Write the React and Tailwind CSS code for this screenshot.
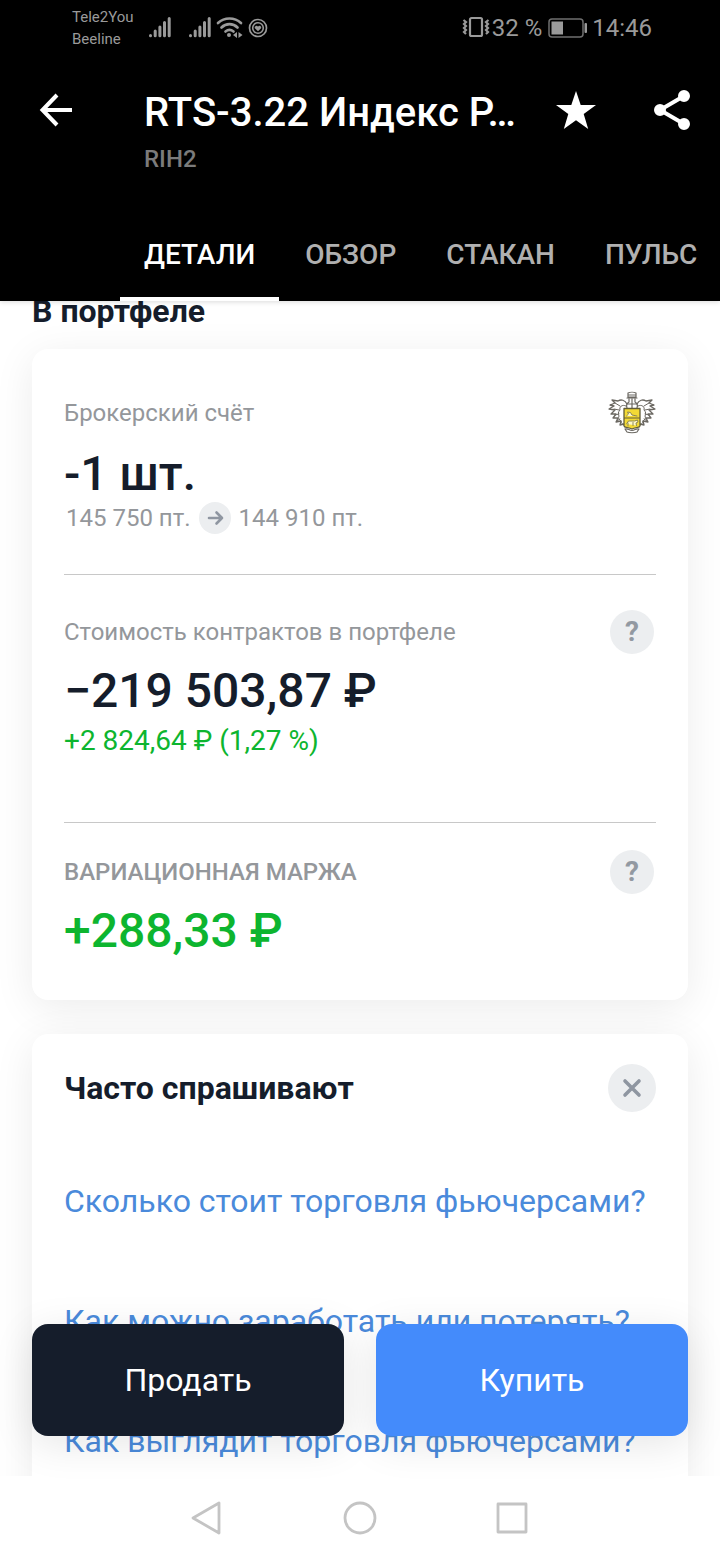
import React, { useState } from "react";

const tabs = ["ДЕТАЛИ", "ОБЗОР", "СТАКАН", "ПУЛЬС"];

const questions = [
  "Сколько стоит торговля фьючерсами?",
  "Как можно заработать или потерять?",
  "Как выглядит торговля фьючерсами?",
];

const SignalIcon = () => (
  <svg className="h-6 w-6" viewBox="0 0 24 24" stroke="#9a9a9a" strokeWidth="3" strokeLinecap="round">
    <path d="M2.500 19.500v.3M7.200 15v4.800M11.900 11v8.800M16.500 6.500v13.300M21.200 2.500v17.300" />
  </svg>
);

const WifiIcon = () => (
  <svg className="h-6 w-7" viewBox="0 0 28 24" fill="none" stroke="#9a9a9a" strokeWidth="2.700" strokeLinecap="round">
    <path d="M2 7C8.500 1 18.500 1 25 7M5.500 11.500C10 7 17 7 21.500 11.500M9.500 15.500c2.500-2 5.500-2 8 0" />
    <circle cx="13" cy="19" r="2" fill="#9a9a9a" stroke="none" />
    <path d="M21 16v6l-4-3zM22.500 16v6l4-3z" fill="#9a9a9a" stroke="none" />
  </svg>
);

const TargetIcon = () => (
  <svg className="h-5 w-5" viewBox="0 0 20 20" fill="none" stroke="#9a9a9a">
    <circle cx="10" cy="10" r="8.500" strokeWidth="1.700" />
    <circle cx="10" cy="10" r="5.300" strokeWidth="1.600" />
    <path d="M10 13.300 6.900 10.200a1.700 1.700 0 0 1 3.100-1.500 1.700 1.700 0 0 1 3.100 1.500z" fill="#9a9a9a" stroke="none" />
  </svg>
);

const VibrateIcon = () => (
  <svg className="h-6 w-7" viewBox="0 0 28 24" fill="none" stroke="#9a9a9a">
    <rect x="8" y="2" width="12" height="18" rx="1.500" strokeWidth="2.200" />
    <path d="m1.500 4 2.500 2-2 2 2 2-2 2 2 2-2 2 2 2M26.500 4 24 6l2 2-2 2 2 2-2 2 2 2-2 2" strokeWidth="2.200" />
  </svg>
);

const BatteryIcon = () => (
  <svg className="h-5 w-10" viewBox="0 0 40 20" fill="none">
    <rect x="1" y="1" width="34" height="18" rx="3" stroke="#6f6f6f" strokeWidth="1.500" />
    <rect x="3.500" y="3.500" width="11.500" height="13" fill="#9a9a9a" />
    <rect x="36.500" y="5" width="2.500" height="10" rx="1" fill="#9a9a9a" />
  </svg>
);

const BankCrest = () => (
  <svg className="h-12 w-12" viewBox="0 0 48 48" fill="none" stroke="#6b6862" strokeLinejoin="round" strokeLinecap="round">
    {/* mantling */}
    <path
      d="M19 15c-2-4-6-5-9-3l-6-1 3 3-5 2 4 1-5 3 6 1-4 4 5 0-3 4 5 0-2 4 5-1-1 4 4-1 1 3 3-2M29 15c2-4 6-5 9-3l6-1-3 3 5 2-4 1 5 3-6 1 4 4-5 0 3 4-5 0 2 4-5-1 1 4-4-1-1 3-3-2"
      strokeWidth="1.300"
    />
    <path
      d="M18 17c-4-2-7 1-6 4-2 2-2 4-1 6-1 2 0 4 2 5 0 2 1 3 3 4M30 17c4-2 7 1 6 4 2 2 2 4 1 6 1 2 0 4-2 5 0 2-1 3-3 4M7 14l5 3M41 14l-5 3M6 20l5 1M42 20l-5 1M7 26l4-1M41 26l-4-1M9 32l3-2M39 32l-3-2"
      strokeWidth="1"
    />
    {/* helmet with its crown */}
    <path
      d="M20 4c2-1 6-1 8 0v4h-8zM19 9h10M21 10v3c-2 1-3 3-2 6M27 10v3c2 1 3 3 2 6M24 10v9M20 6h8M20 15h8"
      strokeWidth="1.200"
    />
    <path d="M16 19.500h16V37c-1 2-5 1-8 3-3-2-7-1-8-3z" fill="#f3da35" stroke="#625d3a" strokeWidth="1.300" />
    <path d="M16.500 29h15" stroke="#625d3a" />
    <path
      d="m18.500 27 2-2-1-2 3 .5 1.500 2.500 5 1M18.500 35l2-3h6l3-1 .500 2-2 1 .500 2.500M20 34v3M25 33.500v3"
      stroke="#8b8552"
      fill="#fff9c8"
    />
    <path d="M17 40c3-1 4 1.500 7 1.500s4-2.500 7-1.500l-2 3c-2 1-8 1-10 0z" fill="#fff" strokeWidth="1.200" />
  </svg>
);

const NavButton = ({ label, children }) => (
  <button type="button" aria-label={label} className="flex h-12 w-12 items-center justify-center">
    <svg className="h-9 w-9" viewBox="0 0 36 36" fill="none" stroke="#c4c4c4" strokeWidth="2.800" strokeLinejoin="round">
      {children}
    </svg>
  </button>
);

const HelpButton = ({ label }) => (
  <button
    type="button"
    aria-label={label}
    className="flex h-11 w-11 shrink-0 items-center justify-center rounded-full bg-[#eceef0] text-[28px] leading-8 font-bold text-[#9299a2]"
  >
    ?
  </button>
);

const StatusBar = () => (
  <div className="flex h-14 items-center justify-between pr-[68px] pl-[72px] text-[#9a9a9a]">
    <div className="flex items-center">
      <div className="w-[76px] text-[15px] leading-[22px]">
        <div>Tele2You</div>
        <div>Beeline</div>
      </div>
      <SignalIcon />
      <div className="ml-4 flex items-center gap-1">
        <SignalIcon />
        <WifiIcon />
        <TargetIcon />
      </div>
    </div>
    <div className="flex items-center text-2xl">
      <VibrateIcon />
      <span className="ml-0.5">32 %</span>
      <span className="mr-1 ml-1.5">
        <BatteryIcon />
      </span>
      <span>14:46</span>
    </div>
  </div>
);

const Header = ({ activeTab, onTabChange }) => (
  <header className="relative z-20 shrink-0 bg-black shadow-[0_1px_5px_rgba(0,0,0,0.15)]">
    <StatusBar />
    <div className="flex h-[110px] items-center pr-6 pl-8">
      <button type="button" aria-label="Назад" className="flex h-12 w-12 shrink-0 items-center justify-center">
        <svg className="h-10 w-10" viewBox="0 0 40 40" fill="none" stroke="#fff" strokeWidth="4">
          <path d="M36 19H7M21 4 6.500 19 21 34" />
        </svg>
      </button>
      <h1 className="ml-16 min-w-0 flex-1 pt-1 text-[40px] leading-[48px] font-medium whitespace-nowrap text-white">
        RTS-3.22 Индекс Р…
      </h1>
      <button type="button" aria-label="В избранное" className="ml-8 flex h-12 w-12 shrink-0 items-center justify-center">
        <svg className="h-12 w-12" viewBox="0 0 48 48" fill="#fff">
          <path d="m24 4 4.700 14H44L31.700 27l4.500 15L24 33.200 11.800 42l4.500-15L4 18h15.300z" />
        </svg>
      </button>
      <button type="button" aria-label="Поделиться" className="ml-12 flex h-12 w-12 shrink-0 items-center justify-center">
        <svg className="h-12 w-12" viewBox="0 0 48 48" fill="#fff" stroke="#fff" strokeWidth="4">
          <path d="M36 9 12 23l24 14" fill="none" />
          <circle cx="36" cy="9" r="4" />
          <circle cx="12" cy="23" r="4" />
          <circle cx="36" cy="37" r="4" />
        </svg>
      </button>
    </div>
    <div className="-mt-7 h-[71px] pl-36 text-2xl leading-[42px] font-medium text-[#7b7b7b]">RIH2</div>
    <nav className="flex h-[92px] gap-0.5 overflow-hidden pl-[120px]">
      {tabs.map((tab) => (
        <button
          key={tab}
          type="button"
          onClick={() => onTabChange(tab)}
          className={
            tab === activeTab
              ? "border-y-4 border-t-transparent border-b-white px-6 text-[28px] font-medium text-white"
              : "border-y-4 border-transparent px-6 text-[28px] font-medium text-[#b0b0b0]"
          }
        >
          {tab}
        </button>
      ))}
    </nav>
  </header>
);

const PortfolioCard = () => (
  <section className="rounded-2xl bg-white px-8 shadow-[0_8px_40px_rgba(0,0,0,0.08)]">
    <div className="border-b border-[#c8c8c8] pt-10 pb-10">
      <div className="flex h-12 items-center justify-between">
        <span className="text-2xl text-[#94979b]">Брокерский счёт</span>
        <BankCrest />
      </div>
      <div className="mt-[9px] text-5xl leading-14 font-medium">-1 шт.</div>
      <div className="flex h-8 items-center gap-2 pl-0.5 text-2xl text-[#94979b]">
        <span>145 750 пт.</span>
        <svg className="h-8 w-8" viewBox="0 0 32 32" fill="none" stroke="#8f96a1" strokeWidth="2.600" strokeLinecap="round" strokeLinejoin="round">
          <circle cx="16" cy="16" r="16" fill="#eceef0" stroke="none" />
          <path d="M10 16h13M17.500 10.500 23 16l-5.500 5.500" />
        </svg>
        <span>144 910 пт.</span>
      </div>
    </div>

    <div className="border-b border-[#c8c8c8] pt-[35px] pb-[59px]">
      <div className="flex items-center justify-between pr-0.5">
        <span className="text-2xl text-[#94979b]">Стоимость контрактов в портфеле</span>
        <HelpButton label="О стоимости контрактов" />
      </div>
      <div className="mt-[9px] text-5xl leading-14 font-medium">−219 503,87 ₽</div>
      <div className="text-[28px] leading-11 text-[#0db52f]">+2 824,64 ₽ (1,27 %)</div>
    </div>

    <div className="pt-[27px] pb-[41px]">
      <div className="flex items-center justify-between pr-0.5">
        <span className="text-2xl font-medium text-[#94979b]">ВАРИАЦИОННАЯ МАРЖА</span>
        <HelpButton label="О вариационной марже" />
      </div>
      <div className="mt-[9px] text-5xl leading-14 font-medium text-[#0db52f]">+288,33 ₽</div>
    </div>
  </section>
);

const FaqCard = () => (
  <section className="mt-[34px] rounded-2xl bg-white px-8 pt-[30px] pb-8 shadow-[0_8px_40px_rgba(0,0,0,0.08)]">
    <div className="flex items-center justify-between">
      <h2 className="text-[32px] leading-9 font-bold">Часто спрашивают</h2>
      <button type="button" aria-label="Закрыть" className="flex h-12 w-12 items-center justify-center rounded-full bg-[#eceef0]">
        <svg className="h-6 w-6" viewBox="0 0 24 24" fill="none" stroke="#8f96a1" strokeWidth="3.600" strokeLinecap="round">
          <path d="m5 5 14 14M19 5 5 19" />
        </svg>
      </button>
    </div>
    <ul className="mt-[29px]">
      {questions.map((question) => (
        <li key={question} className="flex h-30 items-center">
          <a href="#" className="text-[32px] leading-10 text-[#4a8adb]">
            {question}
          </a>
        </li>
      ))}
    </ul>
  </section>
);

const App = () => {
  const [activeTab, setActiveTab] = useState("ДЕТАЛИ");

  return (
    <div className="flex h-screen flex-col bg-white font-[Roboto,sans-serif] text-[#151d2b]">
      <Header activeTab={activeTab} onTabChange={setActiveTab} />

      <div className="relative flex min-h-0 flex-1 flex-col">
        <main className="min-h-0 flex-1 overflow-y-auto px-8 pb-44 [scrollbar-width:none]">
          <h2 className="-mt-2 mb-5 text-[32px] leading-9 font-bold">В портфеле</h2>
          <PortfolioCard />
          <FaqCard />
        </main>

        {/* Trade buttons float over the scrolled content */}
        <div className="absolute inset-x-8 bottom-10 grid grid-cols-2 gap-8 text-[32px] text-white">
          <button type="button" className="h-28 rounded-2xl bg-[#151d2b] shadow-[0_8px_40px_rgba(0,0,0,0.1)]">
            Продать
          </button>
          <button type="button" className="h-28 rounded-2xl bg-[#448bfb] shadow-[0_8px_40px_rgba(0,0,0,0.1)]">
            Купить
          </button>
        </div>
      </div>

      <nav className="flex h-21 shrink-0 items-center justify-center gap-[104px] bg-white">
        <NavButton label="Назад">
          <path d="M29 3v30L3 18z" />
        </NavButton>
        <NavButton label="Домой">
          <circle cx="18" cy="18" r="15" />
        </NavButton>
        <NavButton label="Недавние">
          <path d="M4 4h28v28H4z" />
        </NavButton>
      </nav>
    </div>
  );
};

export default App;
